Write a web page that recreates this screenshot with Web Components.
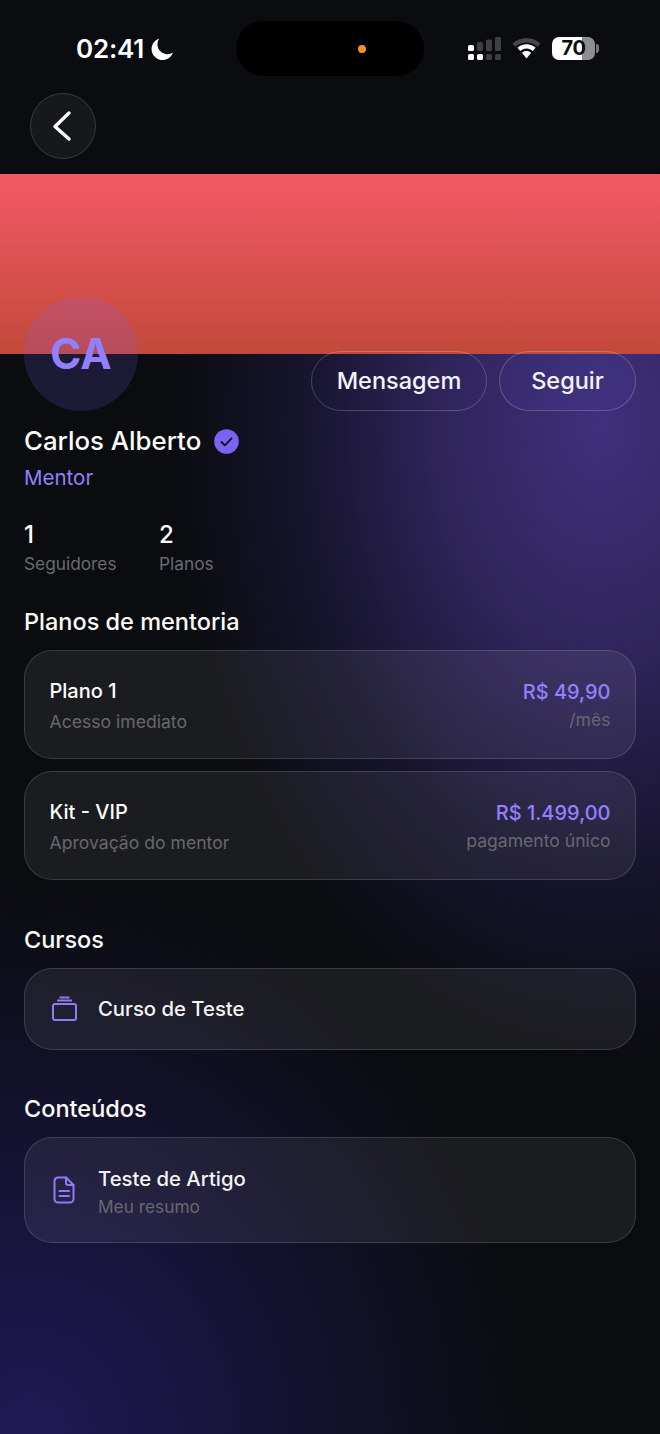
<!DOCTYPE html>
<html lang="pt"><head><meta charset="utf-8"><title>Perfil</title>
<style>
html,body{margin:0;padding:0;height:100%}
body{width:660px;height:1434px;overflow:hidden;font-family:Inter,"Liberation Sans",sans-serif;color:#fff;
background:
 radial-gradient(ellipse 430px 640px at 600px 420px,rgba(62,48,124,1) 0,rgba(58,45,115,.78) 35%,rgba(40,32,90,.4) 70%,rgba(30,25,70,0) 100%),
 radial-gradient(ellipse 500px 560px at 30px 1440px,rgba(32,25,86,1) 0,rgba(28,22,72,.62) 50%,rgba(20,16,50,0) 100%),
 #0b0c10}
</style></head><body>
<profile-screen></profile-screen>
<script>
const def=(n,css,html)=>customElements.define(n,class extends HTMLElement{connectedCallback(){if(this.shadowRoot)return;const s=this.attachShadow({mode:'open'});s.innerHTML=`<style>${css}</style>${typeof html==='function'?html(this):html}`;}});
const a=(e,k)=>e.getAttribute(k)||'';

def('status-bar',`:host{display:flex;align-items:flex-start;height:93px;box-sizing:border-box}
.time{margin:36px 0 0 76px;display:flex;align-items:center;gap:6px;font:600 26px/26px Inter,sans-serif;letter-spacing:-.2px;width:160px;height:26px}
.island{margin-top:21px;width:188px;height:55px;border-radius:28px;background:#000;display:flex;align-items:center;justify-content:center;padding-left:64px;box-sizing:border-box}
.island i{width:8px;height:8px;border-radius:50%;background:#fb8f24}
.icons{margin:37px 0 0 44px;display:flex;align-items:center}
.bat{position:relative;margin-left:11px;width:43px;height:23px;border-radius:7px;background:linear-gradient(90deg,#fff 0 70%,#8e8e90 70% 100%);color:#0b0c10;font:700 20px/23px Inter,sans-serif;text-align:center;letter-spacing:-.3px}
.bat::after{content:"";position:absolute;left:44px;top:7px;width:3px;height:9px;border-radius:0 3px 3px 0;background:#77777a}
svg{display:block}`,
`<div class="time"><span>02:41</span><svg width="24" height="24" viewBox="0 0 24 24"><path fill="#fff" d="M9.200 1.600A11 11 0 1 0 23 15.600 10 10 0 0 1 9.200 1.600Z"/></svg></div>
<div class="island"><i></i></div>
<div class="icons"><svg width="34" height="23" viewBox="0 0 34 23"><g fill="#fff"><rect x="0" y="8" width="6" height="6" rx="1.600"/><rect x="0" y="17" width="6" height="6" rx="1.600"/><rect x="9" y="17" width="6" height="6" rx="1.600"/></g><g fill="#3f3f42"><rect x="9" y="5" width="6" height="9" rx="1.600"/><rect x="18" y="2.500" width="6" height="11.500" rx="1.600"/><rect x="18" y="17" width="6" height="6" rx="1.600"/><rect x="27" y="0" width="6" height="14" rx="1.600"/><rect x="27" y="17" width="6" height="6" rx="1.600"/></g></svg>
<svg style="margin-left:10px" width="29" height="22" viewBox="0 0 30 23"><path fill="#47474a" d="M15 0C9.300 0 4.200 2.200.4 5.800l3 3.400C6.300 6.400 10.400 4.700 15 4.700s8.700 1.700 11.600 4.500l3-3.400C25.800 2.200 20.700 0 15 0Z"/><path fill="#fff" d="M15 6.500c-3.700 0-7 1.400-9.500 3.700l3 3.400c1.700-1.500 4-2.500 6.500-2.500s4.800 1 6.500 2.500l3-3.400C22 7.900 18.700 6.500 15 6.500Zm0 7.200c-1.900 0-3.500.7-4.800 1.800L15 21.500l4.800-6c-1.300-1.100-2.900-1.800-4.800-1.800Z"/></svg>
<div class="bat">70</div></div>`);

def('back-nav',`:host{display:block;height:81px;box-sizing:border-box;padding-left:30px}
.b{width:66px;height:66px;box-sizing:border-box;border-radius:50%;background:#17181c;border:1.5px solid #38393d;display:flex;align-items:center;justify-content:center}
svg{display:block;margin-left:-3px}`,
`<div class="b"><svg width="22" height="32" viewBox="0 0 22 32"><path d="M18 3 4 16.500 18 29" fill="none" stroke="#fff" stroke-width="3.400" stroke-linecap="round" stroke-linejoin="round"/></svg></div>`);

def('app-header',`:host{display:block;background:#0b0c10}`,`<slot></slot>`);
def('cover-banner',`:host{display:block;height:180px;background:linear-gradient(180deg,#f45965 0,#c2493a 100%)}`,``);

def('pill-button',`:host{display:flex;align-items:center;justify-content:center;height:60px;box-sizing:border-box;border-radius:30px;border:1.5px solid rgba(255,255,255,.2);font:500 23.500px/1 Inter,sans-serif;color:#f4f3fa}`,`<slot></slot>`);

def('profile-top',`:host{display:flex;justify-content:space-between;align-items:flex-start;padding:0 24px;margin-top:-57px;position:relative}
.av{width:114px;height:114px;border-radius:50%;background:rgba(124,100,255,.16);display:flex;align-items:center;justify-content:center;font:700 42px/1 Inter,sans-serif;color:#9280ff;box-sizing:border-box}
.btns{display:flex;gap:12px;margin-top:54px}`,
`<div class="av">CA</div><div class="btns"><slot></slot></div>`);

def('profile-info',`:host{display:block;padding:11px 24px 0;height:84px;box-sizing:border-box}
.n{display:flex;align-items:center;gap:13px;font:500 25.800px/38px Inter,sans-serif;color:#fbfbf8;height:38px}
.m{font:400 20.500px/30px Inter,sans-serif;color:#9280ff;margin-top:3px}
svg{display:block}`,
`<div class="n"><span>Carlos Alberto</span><svg width="25" height="25" viewBox="0 0 25 25"><circle cx="12.500" cy="12.500" r="12.300" fill="#7a62f4"/><path d="M7.500 13l3.400 3.400 6.600-7" fill="none" stroke="#12121a" stroke-width="1.900" stroke-linecap="round" stroke-linejoin="round"/></svg></div><div class="m">Mentor</div>`);

def('stat-row',`:host{display:flex;gap:42.500px;padding:25px 24px 0;height:113px;box-sizing:border-box}`,`<slot></slot>`);
def('stat-item',`:host{display:block}
.v{font:500 24px/30px Inter,sans-serif;color:#fff}.l{font:400 17.300px/26px Inter,sans-serif;color:#696a70;margin-top:1px}`,
e=>`<div class="v">${a(e,'value')}</div><div class="l">${a(e,'label')}</div>`);

def('page-section',`:host{display:block;padding:0 24px;margin-bottom:var(--mb,0)}
h2{margin:0;font:500 23.500px/28px Inter,sans-serif;color:#fbfbf8;height:28px}
.c{display:flex;flex-direction:column;gap:12px;margin-top:14px}`,
e=>`<h2>${a(e,'title')}</h2><div class="c"><slot></slot></div>`);

const cardCss=`box-sizing:border-box;border-radius:28px;border:1.5px solid rgba(255,255,255,.14);background:rgba(255,255,255,.065);`;
def('plan-card',`:host{display:flex;justify-content:space-between;align-items:flex-start;height:109px;padding:26px 24.500px 0;${cardCss}}
.t{font:500 20px/28px Inter,sans-serif;color:#fff}.s{font:400 17.600px/26px Inter,sans-serif;color:#67686e;margin-top:4px}
.r{text-align:right}.p{font:500 20px/28px Inter,sans-serif;color:#9280ff;margin-top:1px}.q{font:400 17.600px/26px Inter,sans-serif;color:#67686e;margin-top:1px}`,
e=>`<div><div class="t">${a(e,'name')}</div><div class="s">${a(e,'note')}</div></div><div class="r"><div class="p">${a(e,'price')}</div><div class="q">${a(e,'period')}</div></div>`);

def('item-card',`:host{display:flex;align-items:center;gap:20px;padding:0 26px;${cardCss}}
.t{font:500 20.300px/28px Inter,sans-serif;color:#f4f4f4}.s{font:400 17.300px/24px Inter,sans-serif;color:#67686e;margin-top:2px}
::slotted(svg){display:block;width:27px;flex:none}
.w{padding-top:var(--pt,0)}`,
e=>`<slot></slot><div class="w"><div class="t">${a(e,'name')}</div>${a(e,'note')?`<div class="s">${a(e,'note')}</div>`:''}</div>`);

customElements.define('profile-screen',class extends HTMLElement{connectedCallback(){const s=this.attachShadow({mode:'open'});s.innerHTML=`<style>:host{display:block;width:660px;height:1434px}
.course{height:82px}.article{height:106px;--pt:3px}.mb1{--mb:46px}.mb2{--mb:45px}</style>
<app-header><status-bar></status-bar><back-nav></back-nav></app-header><cover-banner></cover-banner>
<profile-top><pill-button style="width:176px">Mensagem</pill-button><pill-button style="width:137px;background:rgba(124,100,255,.05)">Seguir</pill-button></profile-top>
<profile-info></profile-info>
<stat-row><stat-item value="1" label="Seguidores"></stat-item><stat-item value="2" label="Planos"></stat-item></stat-row>
<page-section class="mb1" title="Planos de mentoria"><plan-card name="Plano 1" note="Acesso imediato" price="R$ 49,90" period="/mês"></plan-card><plan-card name="Kit - VIP" note="Aprovação do mentor" price="R$ 1.499,00" period="pagamento único"></plan-card></page-section>
<page-section class="mb2" title="Cursos"><item-card class="course" name="Curso de Teste"><svg height="26" viewBox="0 0 27 26" fill="none" stroke="#8f7bf6" stroke-width="2"><rect x="2" y="8" width="23" height="16" rx="2"/><path d="M6 4.500h15M8.500 1.500h10" stroke-width="1.800"/></svg></item-card></page-section>
<page-section title="Conteúdos"><item-card class="article" name="Teste de Artigo" note="Meu resumo"><svg height="28" viewBox="0 0 27 28" fill="none" stroke="#8f7bf6" stroke-width="2" stroke-linecap="round" stroke-linejoin="round"><path d="M15 1.500H7a3.500 3.500 0 0 0-3.500 3.500v18A3.500 3.500 0 0 0 7 26.500h12a3.500 3.500 0 0 0 3.500-3.500V9L15 1.500Z"/><path d="M15 1.500V7a2 2 0 0 0 2 2h5.500M8.500 15h9.500M8.500 20h9.500"/></svg></item-card></page-section>`;}});
</script>
</body></html>
